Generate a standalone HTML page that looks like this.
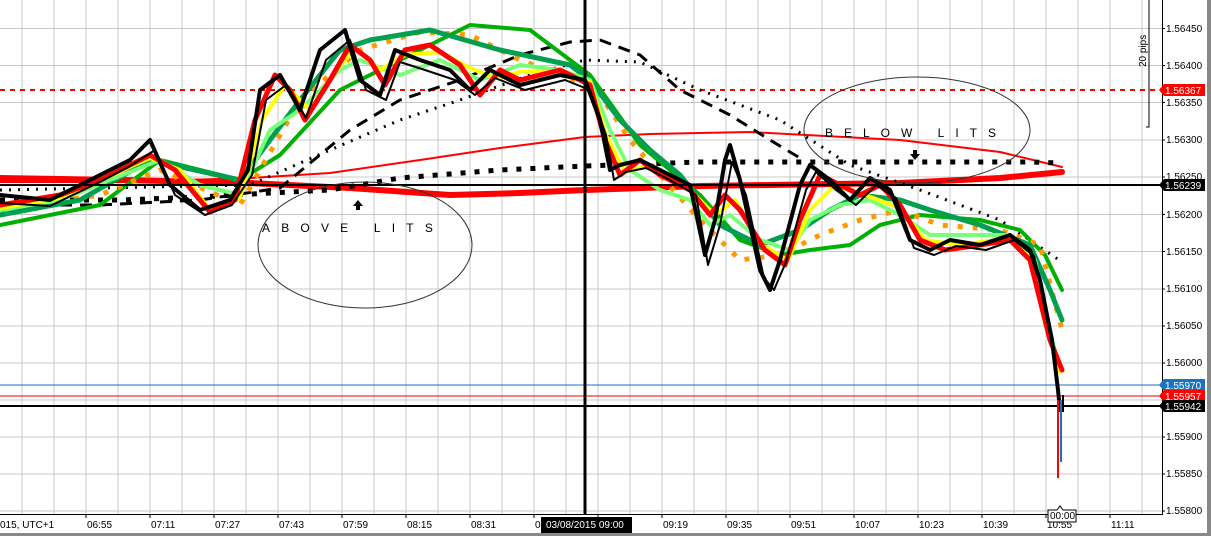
<!DOCTYPE html>
<html><head><meta charset="utf-8"><style>
html,body{margin:0;padding:0;background:#fff;}
svg{display:block;font-family:"Liberation Sans",sans-serif;}
</style></head><body>
<svg width="1211" height="536" viewBox="0 0 1211 536" xmlns="http://www.w3.org/2000/svg">
<rect width="1211" height="536" fill="#fff"/>
<g stroke="#c8c8c8" stroke-width="1">
<path d="M22 0V514M54 0V514M86 0V514M118 0V514M150 0V514M182 0V514M214 0V514M246 0V514M278 0V514M310 0V514M342 0V514M374 0V514M406 0V514M438 0V514M470 0V514M502 0V514M534 0V514M566 0V514M598 0V514M630 0V514M662 0V514M694 0V514M726 0V514M758 0V514M790 0V514M822 0V514M854 0V514M886 0V514M918 0V514M950 0V514M982 0V514M1014 0V514M1046 0V514M1078 0V514M1110 0V514M1142 0V514"/>
<path d="M0 28.5H1162M0 65.5H1162M0 102.5H1162M0 140H1162M0 177H1162M0 214.5H1162M0 251.5H1162M0 289H1162M0 326H1162M0 363H1162M0 400H1162M0 437H1162M0 474H1162M0 511H1162"/>
</g>
<path d="M0 90H1162" stroke="#f00" stroke-width="2" stroke-dasharray="5,5"/>
<path d="M0 385H1162" stroke="#1a73c0" stroke-width="1"/>
<path d="M0 396H1162" stroke="#e00" stroke-width="1"/>
<path d="M0 406H1162" stroke="#000" stroke-width="2"/>
<g fill="none" stroke-linejoin="round" stroke-linecap="round">
<path d="M0 182 L120 182 L250 178 L330 173 L420 160 L500 148 L585 137 L650 134 L750 132 L900 140 L1000 152 L1062 167" stroke="#f00" stroke-width="2"/>
<path d="M0 178 L120 180 L250 183 L350 188 L450 195 L520 193 L585 190 L700 186 L900 183 L1000 178 L1062 172" stroke="#f00" stroke-width="6"/>
<path d="M0 200 L120 200 L200 197 L270 193 L330 190 L400 178 L500 170 L585 166 L700 162 L900 162 L1030 162 L1062 163" stroke="#000" stroke-width="5" stroke-dasharray="5,9" stroke-linecap="butt"/>
<path d="M0 205 L100 205 L200 200 L280 188 L350 130 L400 100 L460 80 L520 55 L570 42 L600 40 L640 55 L680 90 L730 115 L770 140 L800 158" stroke="#000" stroke-width="3" stroke-dasharray="12,8" stroke-linecap="butt"/>
<path d="M0 190 L250 185 L330 150 L400 120 L460 100 L530 75 L585 60 L640 62 L700 90 L780 120 L850 165 L920 190 L1000 220 L1062 262" stroke="#000" stroke-width="3" stroke-dasharray="2,7" stroke-linecap="butt"/>
<path d="M0 225 L100 205 L160 160 L200 170 L240 180 L280 155 L340 90 L400 60 L460 30 L470 25 L530 30 L590 75 L640 145 L700 195 L740 240 L780 255 L810 250 L850 245 L880 225 L920 215 L980 220 L1020 230 L1045 255 L1062 290" stroke="#00b000" stroke-width="4"/>
<path d="M0 210 L100 195 L160 170 L240 205 L300 100 L360 50 L420 32 L470 35 L520 60 L560 75 L600 95 L630 140 L660 175 L700 220 L740 260 L780 255 L820 235 L860 220 L900 210 L940 225 L1000 230 L1040 245 L1062 330" stroke="#f90" stroke-width="5" stroke-dasharray="5,10" stroke-linecap="butt"/>
<path d="M0 215 L80 200 L150 160 L240 180 L300 100 L340 50 L370 40 L430 30 L500 50 L570 65 L590 80 L620 120 L650 150 L680 175 L700 200 L720 225 L760 245 L800 230 L830 210 L860 195 L900 200 L930 210 L980 225 L1030 245 L1050 290 L1062 320" stroke="#00a050" stroke-width="5"/>
<path d="M0 210 L60 200 L110 180 L160 160 L200 185 L240 195 L270 130 L300 110 L340 70 L360 60 L400 75 L440 60 L480 80 L520 65 L560 70 L590 80 L610 130 L630 170 L660 190 L690 200 L710 225 L730 215 L760 240 L790 250 L810 220 L840 205 L870 200 L900 215 L930 235 L970 235 L1010 235 L1035 260 L1050 330 L1058 365" stroke="#7f7" stroke-width="4"/>
<path d="M0 208 L60 198 L105 178 L150 158 L180 170 L210 210 L240 198 L262 120 L285 85 L310 110 L335 72 L355 48 L380 70 L405 55 L440 52 L470 68 L495 78 L520 72 L560 72 L590 82 L606 135 L625 172 L650 165 L690 190 L715 215 L735 200 L762 245 L788 260 L810 210 L835 185 L865 195 L900 208 L925 240 L960 245 L1010 238 L1032 258 L1052 345 L1060 372" stroke="#ff0" stroke-width="4"/>
<path d="M0 205 L60 195 L100 180 L150 155 L175 170 L210 212 L235 200 L255 120 L275 75 L290 90 L305 120 L330 80 L350 45 L370 60 L385 85 L405 50 L430 45 L460 65 L480 95 L500 70 L520 80 L560 70 L590 85 L605 140 L620 175 L640 160 L660 175 L690 190 L710 215 L725 195 L740 210 L765 250 L785 265 L800 220 L820 175 L840 185 L860 195 L880 185 L900 205 L920 240 L945 250 L980 245 L1010 240 L1030 260 L1050 340 L1062 370" stroke="#f00" stroke-width="5"/>
<path d="M0 195 L50 200 L100 175 L130 160 L150 140 L170 185 L200 210 L230 200 L248 170 L260 90 L280 75 L300 110 L320 50 L345 30 L360 80 L380 95 L395 50 L420 60 L450 70 L470 90 L490 70 L520 85 L560 75 L585 80 L600 120 L610 170 L620 165 L640 160 L660 170 L690 185 L705 255 L715 220 L725 160 L730 145 L740 180 L760 270 L770 290 L780 260 L800 185 L810 165 L830 180 L850 200 L870 178 L890 190 L910 240 L930 250 L950 240 L980 245 L1010 235 L1030 250 L1040 280 L1052 340 L1058 390 L1060 410" stroke="#000" stroke-width="4"/>
<path d="M0 203 L50 206 L100 182 L130 166 L155 150 L175 195 L205 215 L232 205 L252 175 L266 100 L286 85 L306 118 L326 60 L350 40 L366 90 L386 100 L400 62 L425 70 L455 80 L475 95 L495 78 L525 90 L565 80 L590 90 L606 135 L614 180 L626 172 L646 168 L666 178 L696 195 L708 265 L720 225 L732 162 L746 195 L764 278 L774 290 L786 262 L806 190 L816 172 L836 190 L856 205 L876 185 L896 198 L914 248 L934 255 L956 246 L986 250 L1014 240 L1034 256 L1044 295 L1054 360" stroke="#000" stroke-width="2"/>
</g>
<path d="M1058 400V478" stroke="#f00" stroke-width="2"/>
<path d="M1061 400V462" stroke="#1a73c0" stroke-width="2"/>
<path d="M1063 395V412" stroke="#000" stroke-width="2"/>
<path d="M0 185H1162" stroke="#000" stroke-width="2"/>
<path d="M585 0V514" stroke="#000" stroke-width="3"/>
<ellipse cx="365" cy="245" rx="107" ry="63" fill="none" stroke="#333" stroke-width="1"/>
<text x="262" y="232" font-size="12" fill="#000" letter-spacing="11.2">ABOVE LITS</text>
<path d="M358 200 L353 206 H356 V210 H360 V206 H363 Z" fill="#000"/>
<ellipse cx="917" cy="130" rx="113" ry="53" fill="none" stroke="#333" stroke-width="1"/>
<text x="825" y="137" font-size="12" fill="#000" letter-spacing="11">BELOW LITS</text>
<path d="M915 160 L910 154 H913 V150 H917 V154 H920 Z" fill="#000"/>
<path d="M1149 0V127H1146" stroke="#000" stroke-width="1" fill="none"/>
<text transform="translate(1146,67) rotate(-90)" font-size="10" fill="#000">20 pips</text>
<rect x="1163" y="0" width="48" height="536" fill="#fff"/>
<path d="M1162.5 0V514.5H0" stroke="#000" stroke-width="1" fill="none"/>
<g stroke="#000"><path d="M1162 28.5h3M1162 65.5h3M1162 102.5h3M1162 140h3M1162 177h3M1162 214.5h3M1162 251.5h3M1162 289h3M1162 326h3M1162 363h3M1162 400h3M1162 437h3M1162 474h3M1162 511h3"/></g>
<g font-size="10" fill="#000">
<text x="1166" y="32">1.56450</text>
<text x="1166" y="69">1.56400</text>
<text x="1166" y="106">1.56350</text>
<text x="1166" y="143">1.56300</text>
<text x="1166" y="180">1.56250</text>
<text x="1166" y="218">1.56200</text>
<text x="1166" y="255">1.56150</text>
<text x="1166" y="292">1.56100</text>
<text x="1166" y="329">1.56050</text>
<text x="1166" y="366">1.56000</text>
<text x="1166" y="440">1.55900</text>
<text x="1166" y="477">1.55850</text>
<text x="1166" y="514">1.55800</text>
</g>
<g font-size="10" fill="#fff">
<path d="M1159 90 l5 -6 h41 v12 h-41 z" fill="#f00"/><text x="1165" y="94">1.56367</text>
<path d="M1159 185 l5 -6 h41 v12 h-41 z" fill="#000"/><text x="1165" y="189">1.56239</text>
<path d="M1159 385 l5 -6 h41 v12 h-41 z" fill="#1a73c0"/><text x="1165" y="389">1.55970</text>
<path d="M1159 396 l5 -6 h41 v12 h-41 z" fill="#f00"/><text x="1165" y="400">1.55957</text>
<path d="M1159 406 l5 -6 h41 v12 h-41 z" fill="#000"/><text x="1165" y="410">1.55942</text>
</g>
<g stroke="#000"><path d="M86 514v4M150 514v4M214 514v4M278 514v4M342 514v4M406 514v4M470 514v4M534 514v4M598 514v4M662 514v4M726 514v4M790 514v4M854 514v4M918 514v4M982 514v4M1046 514v4M1110 514v4"/></g>
<g font-size="10" fill="#000">
<text x="0" y="528">015, UTC+1</text>
<text x="87" y="528">06:55</text><text x="151" y="528">07:11</text><text x="215" y="528">07:27</text>
<text x="279" y="528">07:43</text><text x="343" y="528">07:59</text><text x="407" y="528">08:15</text>
<text x="471" y="528">08:31</text><text x="535" y="528">08</text><text x="663" y="528">09:19</text>
<text x="727" y="528">09:35</text><text x="791" y="528">09:51</text><text x="855" y="528">10:07</text>
<text x="919" y="528">10:23</text><text x="983" y="528">10:39</text><text x="1047" y="528">10:55</text>
<text x="1111" y="528">11:11</text>
</g>
<rect x="541" y="517" width="91" height="16" fill="#000"/>
<text x="546" y="528" font-size="10" fill="#fff">03/08/2015 09:00</text>
<path d="M1048 510 h9 l3 -4 l3 4 h13 v12 h-28 z" fill="#fff" stroke="#000" stroke-width="1"/>
<text x="1050" y="519" font-size="10" fill="#000">00:00</text>
<rect x="0" y="533" width="1211" height="3" fill="#888"/>
<rect x="1207" y="0" width="4" height="536" fill="#888"/>
</svg>
</body></html>
